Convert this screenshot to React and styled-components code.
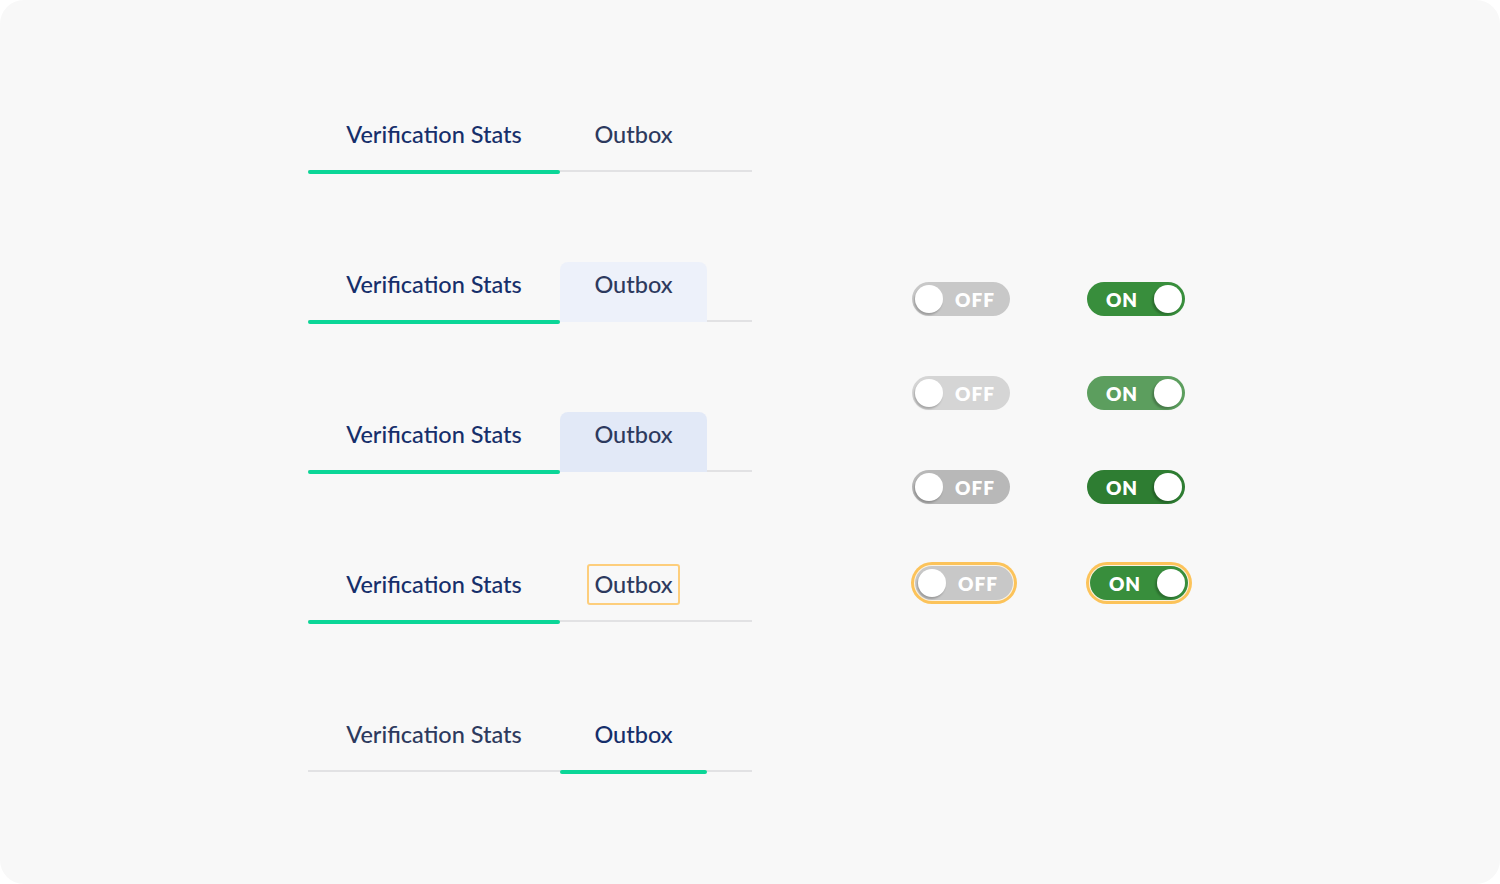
import React from "react";
import styled, { createGlobalStyle, css } from "styled-components";

const GlobalStyle = createGlobalStyle`
  html, body {
    margin: 0;
    padding: 0;
    background: #ffffff;
  }
  * {
    box-sizing: border-box;
  }
`;

const tabRows = [
  { active: 0, state: null },
  { active: 0, state: "hover" },
  { active: 0, state: "pressed" },
  { active: 0, state: "focus" },
  { active: 1, state: null },
];

const toggleRows = [
  { variant: "default" },
  { variant: "hover" },
  { variant: "pressed" },
  { variant: "focus" },
];

function TabBar({ active, state }) {
  const labels = ["Verification Stats", "Outbox"];
  return (
    <Bar>
      {labels.map((label, i) => (
        <Tab
          key={label}
          $wide={i === 0}
          $active={active === i}
          $state={active === i ? null : state}
        >
          <TabLabel $active={active === i} $focus={active !== i && state === "focus"}>
            {label}
          </TabLabel>
        </Tab>
      ))}
    </Bar>
  );
}

function Toggle({ on, variant }) {
  return (
    <Switch $on={on} $variant={variant}>
      {on ? (
        <>
          <SwitchText>ON</SwitchText>
          <Knob $on />
        </>
      ) : (
        <>
          <Knob />
          <SwitchText>OFF</SwitchText>
        </>
      )}
    </Switch>
  );
}

export default function App() {
  return (
    <>
      <GlobalStyle />
      <Card>
        <TabsColumn>
          {tabRows.map((row, i) => (
            <TabBar key={i} active={row.active} state={row.state} />
          ))}
        </TabsColumn>
        <TogglesGrid>
          {toggleRows.map((row) => (
            <React.Fragment key={row.variant}>
              <Toggle on={false} variant={row.variant} />
              <Toggle on variant={row.variant} />
            </React.Fragment>
          ))}
        </TogglesGrid>
      </Card>
    </>
  );
}

const Card = styled.div`
  width: 1500px;
  height: 884px;
  background: #f8f8f8;
  border-radius: 24px;
  display: flex;
  align-items: flex-start;
  padding-left: 308px;
  gap: 160px;
  overflow: hidden;
`;

const TabsColumn = styled.div`
  display: flex;
  flex-direction: column;
  gap: 90px;
  padding-top: 112px;
`;

const Bar = styled.div`
  width: 444px;
  height: 60px;
  display: flex;
  border-bottom: 2px solid #e2e2e4;
`;

const Tab = styled.div`
  position: relative;
  width: ${(p) => (p.$wide ? "252px" : "147px")};
  height: 60px;
  display: flex;
  align-items: center;
  justify-content: center;
  padding-bottom: 15px;
  border-radius: 8px 8px 0 0;
  ${(p) =>
    p.$state === "hover" &&
    css`
      background: #edf1fa;
    `}
  ${(p) =>
    p.$state === "pressed" &&
    css`
      background: #e2e9f7;
    `}
  ${(p) =>
    p.$active &&
    css`
      &::after {
        content: "";
        position: absolute;
        left: 0;
        right: 0;
        bottom: -2px;
        height: 4px;
        border-radius: 2px;
        background: #0bd697;
      }
    `}
`;

const TabLabel = styled.span`
  font-family: "Lato", "Open Sans", sans-serif;
  font-size: 23.5px;
  font-weight: 500;
  color: ${(p) => (p.$active ? "#162f6b" : "#2d3a5e")};
  line-height: 1;
  padding: ${(p) => (p.$focus ? "7px 5px" : "0")};
  border: ${(p) => (p.$focus ? "2px solid #fdce7c" : "none")};
  border-radius: 3px;
`;

const TogglesGrid = styled.div`
  display: grid;
  grid-template-columns: 98px 98px;
  column-gap: 77px;
  row-gap: 60px;
  padding-top: 282px;
`;

const switchColors = {
  off: {
    default: "#c8c8c8",
    hover: "#d5d5d5",
    pressed: "#b8b8b8",
    focus: "#c8c8c8",
  },
  on: {
    default: "#388e3c",
    hover: "#5c9e5e",
    pressed: "#2e7d32",
    focus: "#388e3c",
  },
};

const Switch = styled.div`
  width: 98px;
  height: 34px;
  border-radius: 17px;
  padding: 0 3px;
  display: flex;
  align-items: center;
  background: ${(p) => switchColors[p.$on ? "on" : "off"][p.$variant]};
  ${(p) =>
    p.$variant === "focus" &&
    css`
      margin: 2px 0 0 3px;
      box-shadow: 0 0 0 1px #fbf3e3, 0 0 0 4px #fcc35a;
    `}
`;

const Knob = styled.div`
  width: 28px;
  height: 28px;
  flex: none;
  border-radius: 50%;
  background: #ffffff;
  box-shadow: ${(p) =>
    p.$on ? "-2px 2px 2px rgba(0,0,0,0.22)" : "-1px 2px 2px rgba(0,0,0,0.22)"};
`;

const SwitchText = styled.span`
  flex: 1;
  text-align: center;
  font-family: "Lato", "Inter", sans-serif;
  font-weight: 800;
  font-size: 19px;
  letter-spacing: 1px;
  color: #ffffff;
  line-height: 1;
  padding-top: 1px;
`;
